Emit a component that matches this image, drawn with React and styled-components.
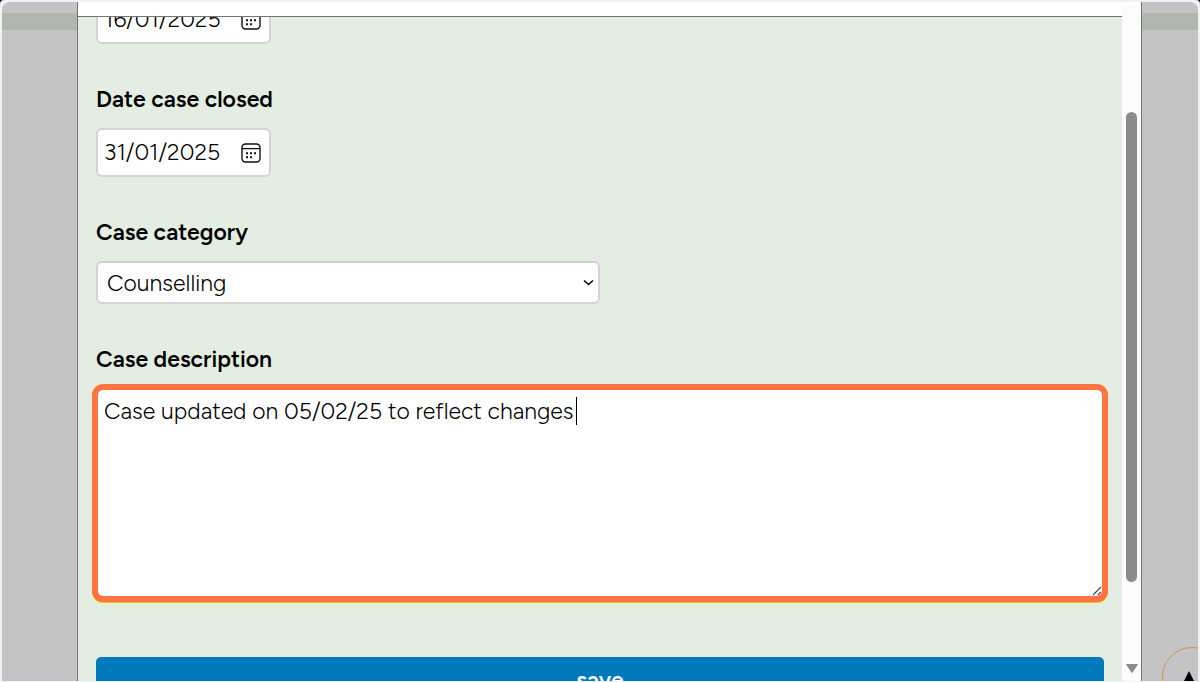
import React, { useState } from "react";
import styled, { createGlobalStyle } from "styled-components";

const GlobalStyle = createGlobalStyle`
  *, *::before, *::after { box-sizing: border-box; }
  body { margin: 0; background: #000; }
  body, input, select, textarea, button {
    font-family: Figtree, Inter, "Liberation Sans", sans-serif;
    color: #000;
  }
`;

const Frame = styled.div`
  height: 100vh;
  padding: 2px 2px 1px;
  background: #f1f1f6;
  border-radius: 4px 4px 0 0;
  overflow: hidden;
`;

const Backdrop = styled.div`
  position: relative;
  height: 100%;
  display: grid;
  grid-template-columns: 75px minmax(0, 1fr) 56px;
  background: #c4c4c4;
  border-radius: 8px 8px 0 0;
  overflow: hidden;
`;

const Side = styled.div`
  padding-top: 11px;
`;

const Band = styled.div`
  height: 17px;
  background: #afb7ae;
`;

const Dialog = styled.section`
  display: flex;
  min-width: 0;
  min-height: 0;
  background: #fff;
  border: solid #737373;
  border-width: 0 1px;
`;

const Panel = styled.div`
  flex: 1;
  min-width: 0;
  display: flex;
  flex-direction: column;
`;

const PanelHeader = styled.header`
  flex: none;
  height: 15px;
  border-bottom: 1px solid #737373;
`;

const PanelBody = styled.div`
  flex: 1;
  min-height: 0;
  overflow: hidden;
  background: #e3ede2;
`;

const Form = styled.form`
  display: flex;
  flex-direction: column;
  gap: 41px;
  margin-top: -22px;
  padding: 0 18px;
`;

const Field = styled.div`
  display: flex;
  flex-direction: column;
  align-items: flex-start;
  gap: 15px;
`;

const Label = styled.label`
  font-size: 23px;
  line-height: 28px;
  font-weight: 600;
`;

const DateBox = styled.div`
  display: flex;
  align-items: center;
  justify-content: space-between;
  width: 175px;
  height: 49px;
  padding: 0 8px 0 6px;
  background: #fff;
  border: 2px solid #d3d3d3;
  border-radius: 6px;
`;

const DateInput = styled.input`
  width: 128px;
  padding: 0 0 2px;
  border: 0;
  outline: 0;
  background: transparent;
  font-size: 23px;
  line-height: 28px;
  font-weight: 360;
`;

const IconButton = styled.button`
  display: flex;
  padding: 0;
  border: 0;
  background: none;
`;

const SelectBox = styled.div`
  position: relative;
  width: 50%;
`;

const Select = styled.select`
  display: block;
  width: 100%;
  height: 43px;
  padding: 0 32px 0 9px;
  appearance: none;
  background: #fff;
  border: 2px solid #d3d3d3;
  border-radius: 6px;
  font-size: 23px;
  font-weight: 360;
`;

const Chevron = styled.svg`
  position: absolute;
  right: 6px;
  top: 18px;
  pointer-events: none;
`;

const AreaBox = styled.div`
  position: relative;
  width: 100%;
`;

const TextArea = styled.textarea`
  display: block;
  width: 100%;
  height: 210px;
  padding: 7px 6px;
  resize: none;
  background: #fff;
  border: 2px solid #ff7442;
  border-radius: 7px;
  outline: 0;
  box-shadow: 0 0 0 4px #ff7442, 0 1px 0 4px #ffb900;
  font-size: 23px;
  line-height: 28px;
  font-weight: 360;
`;

const Caret = styled.span`
  position: absolute;
  left: 480px;
  top: 9px;
  width: 1px;
  height: 28px;
  background: #000;
`;

const Grip = styled.svg`
  position: absolute;
  right: 2px;
  bottom: 2px;
`;

const SaveButton = styled.button`
  height: 46px;
  margin-top: 18px;
  padding: 0;
  border: 0;
  border-radius: 5px;
  background: #007aba;
  color: #fff;
  font-size: 23px;
  line-height: 28px;
  font-weight: 600;
`;

const Scrollbar = styled.div`
  flex: none;
  width: 19px;
  display: flex;
  flex-direction: column;
  align-items: center;
  padding: 110px 0 8px;
  background: #fcfcfc;
`;

const Thumb = styled.div`
  flex: 470 0 0;
  width: 11px;
  border-radius: 6px;
  background: #8b8b8b;
`;

const Track = styled.div`
  flex: 82 0 0;
`;

const TopButton = styled.button`
  position: absolute;
  right: -24px;
  bottom: -26px;
  display: flex;
  align-items: flex-start;
  width: 60px;
  height: 60px;
  padding: 23px 0 0 19px;
  border: 1px solid #c49a45;
  border-radius: 50%;
  background: none;
`;

function CalendarIcon() {
  return (
    <svg width="20" height="20" viewBox="0 0 20 20" fill="none" aria-hidden="true">
      <rect x="1" y="1" width="18" height="18" rx="3.5" stroke="#111" strokeWidth="1.4" />
      <path d="M1 5.6h18" stroke="#111" strokeWidth="1.4" />
      <path
        d="M5 9.2h2v2h-2zM9 9.2h2v2h-2zM13 9.2h2v2h-2zM5 13.2h2v2h-2zM9 13.2h2v2h-2z"
        fill="#111"
      />
    </svg>
  );
}

function DateField({ id, label, ariaLabel, initial }) {
  const [value, setValue] = useState(initial);
  return (
    <Field>
      {label && <Label htmlFor={id}>{label}</Label>}
      <DateBox>
        <DateInput
          id={id}
          aria-label={ariaLabel}
          value={value}
          onChange={(e) => setValue(e.target.value)}
        />
        <IconButton type="button" aria-label="Choose date">
          <CalendarIcon />
        </IconButton>
      </DateBox>
    </Field>
  );
}

export default function App() {
  return (
    <>
      <GlobalStyle />
      <Frame>
        <Backdrop>
          <Side>
            <Band />
          </Side>
          <Dialog role="dialog" aria-label="Edit case">
            <Panel>
              <PanelHeader />
              <PanelBody>
                <Form onSubmit={(e) => e.preventDefault()}>
                  <DateField id="opened" ariaLabel="Date case opened" initial="16/01/2025" />
                  <DateField id="closed" label="Date case closed" initial="31/01/2025" />
                  <Field>
                    <Label htmlFor="category">Case category</Label>
                    <SelectBox>
                      <Select id="category" defaultValue="Counselling">
                        <option>Counselling</option>
                      </Select>
                      <Chevron width="11" height="8" viewBox="0 0 11 8" fill="none" aria-hidden="true">
                        <path d="M1 1.5l4.5 4 4.5-4" stroke="#000" strokeWidth="1.6" />
                      </Chevron>
                    </SelectBox>
                  </Field>
                  <Field>
                    <Label htmlFor="description">Case description</Label>
                    <AreaBox>
                      <TextArea
                        id="description"
                        defaultValue="Case updated on 05/02/25 to reflect changes"
                      />
                      <Caret />
                      <Grip width="10" height="10" viewBox="0 0 10 10" aria-hidden="true">
                        <path d="M1 9l8-8M6 9l3-3" stroke="#444" strokeWidth="1.1" />
                      </Grip>
                    </AreaBox>
                  </Field>
                  <SaveButton type="submit">save</SaveButton>
                </Form>
              </PanelBody>
            </Panel>
            <Scrollbar aria-hidden="true">
              <Thumb />
              <Track />
              <svg width="12" height="9" viewBox="0 0 12 9">
                <path d="M1 0h10q1 0 .6 1L6.8 8.2q-.8 1-1.6 0L.4 1Q0 0 1 0z" fill="#8b8b8b" />
              </svg>
            </Scrollbar>
          </Dialog>
          <Side>
            <Band />
          </Side>
          <TopButton type="button" aria-label="Back to top">
            <svg width="14" height="14" viewBox="0 0 14 14" aria-hidden="true">
              <path d="M7 0l7 14H0z" fill="#000" />
            </svg>
          </TopButton>
        </Backdrop>
      </Frame>
    </>
  );
}
